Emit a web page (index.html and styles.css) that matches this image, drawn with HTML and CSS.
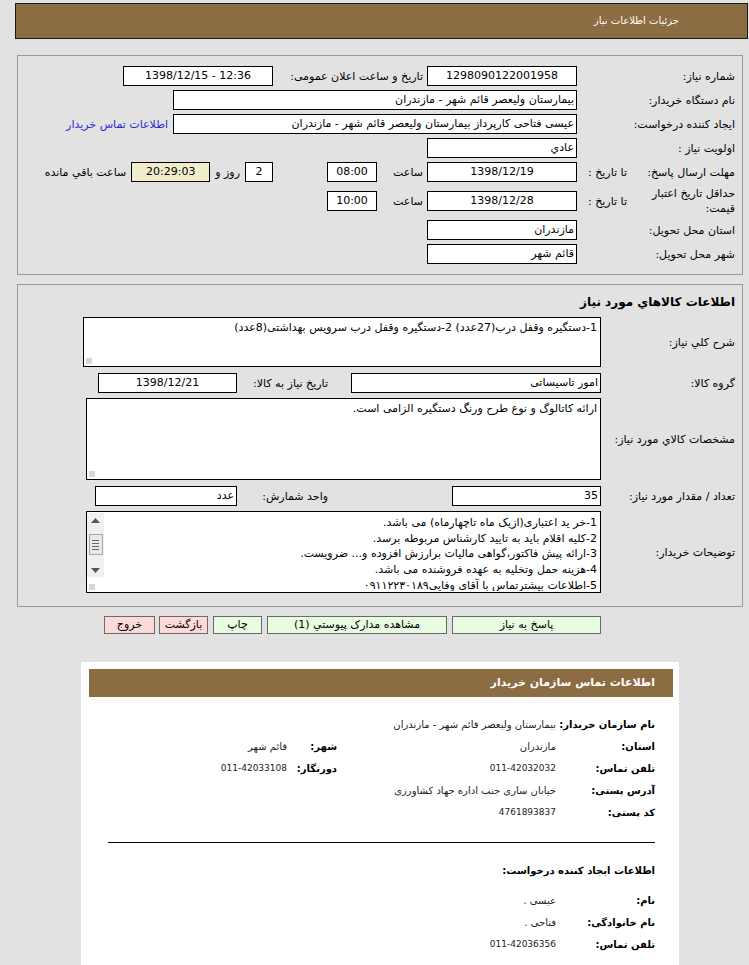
FILE: index.html
```html
<!DOCTYPE html>
<html dir="rtl" lang="fa">
<head>
<meta charset="utf-8">
<link rel="stylesheet" href="styles.css">
</head>
<body>
<div class="hdr">جزئیات اطلاعات نیاز</div>

<div class="panel p1">
  <div class="row">
    <div class="lbl">شماره نیاز:</div>
    <div class="fld w150 c">1298090122001958</div>
    <div class="mid">تاریخ و ساعت اعلان عمومی:</div>
    <div class="fld w150 c" dir="ltr">1398/12/15 - 12:36</div>
  </div>
  <div class="row">
    <div class="lbl">نام دستگاه خریدار:</div>
    <div class="fld w404">بیمارستان ولیعصر قائم شهر - مازندران</div>
  </div>
  <div class="row">
    <div class="lbl">ایجاد کننده درخواست:</div>
    <div class="fld w404">عیسی فتاحی کارپرداز بیمارستان ولیعصر قائم شهر - مازندران</div>
    <a class="lnk" href="#">اطلاعات تماس خریدار</a>
  </div>
  <div class="row">
    <div class="lbl">اولویت نیاز :</div>
    <div class="fld w150">عادي</div>
  </div>
  <div class="row">
    <div class="lbl split"><span>مهلت ارسال پاسخ:</span><span class="sub">تا تاریخ :</span></div>
    <div class="fld w150 c">1398/12/19</div>
    <div class="saat">ساعت</div>
    <div class="fld w50 c">08:00</div>
    <div class="fld w28 c days">2</div>
    <div class="txt">روز و</div>
    <div class="fld w79 c remain">20:29:03</div>
    <div class="txt">ساعت باقي مانده</div>
  </div>
  <div class="row tall">
    <div class="lbl split"><span class="two">حداقل تاریخ اعتبار قیمت:</span><span class="sub">تا تاریخ :</span></div>
    <div class="fld w150 c">1398/12/28</div>
    <div class="saat">ساعت</div>
    <div class="fld w50 c">10:00</div>
  </div>
  <div class="row">
    <div class="lbl">استان محل تحویل:</div>
    <div class="fld w150">مازندران</div>
  </div>
  <div class="row">
    <div class="lbl">شهر محل تحویل:</div>
    <div class="fld w150">قائم شهر</div>
  </div>
</div>

<div class="panel p2">
  <div class="ptitle">اطلاعات کالاهاي مورد نیاز</div>
  <div class="row2 ra">
    <div class="lbl2">شرح کلي نیاز:</div>
    <div class="area a1">1-دستگیره وقفل درب(27عدد) 2-دستگیره وقفل درب سرویس بهداشتی(8عدد)<span class="grip"></span></div>
  </div>
  <div class="row2 rb">
    <div class="lbl2">گروه کالا:</div>
    <div class="fld w250">امور تاسیساتی</div>
    <div class="mid2">تاریخ نیاز به کالا:</div>
    <div class="fld w139 c">1398/12/21</div>
  </div>
  <div class="row2 rc">
    <div class="lbl2">مشخصات کالاي مورد نیاز:</div>
    <div class="area a2">ارائه کاتالوگ و نوع طرح ورنگ دستگیره الزامی است.<span class="grip"></span></div>
  </div>
  <div class="row2 rd">
    <div class="lbl2">تعداد / مقدار مورد نیاز:</div>
    <div class="fld w149">35</div>
    <div class="mid2">واحد شمارش:</div>
    <div class="fld w142">عدد</div>
  </div>
  <div class="row2 re">
    <div class="lbl2">توضیحات خریدار:</div>
    <div class="area a3">
      <div class="lines">
        <div>1-خر ید اعتباری(ازیک ماه تاچهارماه) می باشد.</div>
        <div>2-کلیه اقلام باید به تایید کارشناس مربوطه برسد.</div>
        <div>3-ارائه پیش فاکتور،گواهی مالیات برارزش افزوده و... ضرویست.</div>
        <div>4-هزینه حمل وتخلیه به عهده فروشنده می باشد.</div>
        <div>5-اطلاعات بیشترتماس با آقای وفایی۰۹۱۱۲۲۳۰۱۸۹</div>
      </div>
      <div class="sbar">
        <div class="sb">
          <svg width="9" height="5" viewBox="0 0 9 5"><path d="M4.5 0 L9 5 L0 5 Z" fill="#555"/></svg>
          <div class="thumb"><i></i><i></i><i></i><i></i></div>
          <svg width="9" height="5" viewBox="0 0 9 5"><path d="M0 0 L9 0 L4.5 5 Z" fill="#555"/></svg>
        </div>
        <span class="grip g2"></span>
      </div>
    </div>
  </div>
</div>

<div class="btns">
  <div class="btn green w149b">پاسخ به نیاز</div>
  <div class="btn green w180b">مشاهده مدارک پیوستي (1)</div>
  <div class="btn green w49b">چاپ</div>
  <div class="btn pink w49b">بازگشت</div>
  <div class="btn pink w51b">خروج</div>
</div>

<div class="contact">
  <div class="chdr">اطلاعات تماس سازمان خریدار</div>
  <div class="crow first">
    <div class="cl">نام سازمان خریدار:</div>
    <div class="cv">بیمارستان ولیعصر قائم شهر - مازندران</div>
  </div>
  <div class="crow">
    <div class="cl">استان:</div>
    <div class="cv cvw">مازندران</div>
    <div class="cl2">شهر:</div>
    <div class="cv">قائم شهر</div>
  </div>
  <div class="crow">
    <div class="cl">تلفن تماس:</div>
    <div class="cv cvw num">011-42032032</div>
    <div class="cl2">دورنگار:</div>
    <div class="cv num">011-42033108</div>
  </div>
  <div class="crow">
    <div class="cl">آدرس پستی:</div>
    <div class="cv">خیابان ساری جنب اداره جهاد کشاورزی</div>
  </div>
  <div class="crow">
    <div class="cl">کد پستی:</div>
    <div class="cv num">4761893837</div>
  </div>
  <hr class="sep">
  <div class="csub">اطلاعات ایجاد کننده درخواست:</div>
  <div class="crow first2">
    <div class="cl">نام:</div>
    <div class="cv">عیسی .</div>
  </div>
  <div class="crow">
    <div class="cl">نام خانوادگی:</div>
    <div class="cv">فتاحی .</div>
  </div>
  <div class="crow">
    <div class="cl">تلفن تماس:</div>
    <div class="cv num">011-42036356</div>
  </div>
</div>
</body>
</html>
```
FILE: styles.css
```css
* { box-sizing: border-box; }
html, body { margin: 0; padding: 0; }
body {
  background: #e2e2e2;
  font-family: "DejaVu Sans", sans-serif;
  font-size: 11px;
  color: #000;
  height: 965px;
  overflow: hidden;
}
.hdr {
  margin: 3px 1px 0 15px;
  height: 36px;
  background: #8c6c42;
  border: 1px solid #1a1a1a;
  color: #fff;
  font-size: 10px;
  line-height: 34px;
  padding-right: 68px;
}
.panel {
  margin: 0 6px 0 17px;
  border: 1px solid #9a9a9a;
}
.p1 { margin-top: 16px; padding: 8px 7px 10px 0; height: 220px; }
.row { display: flex; align-items: center; height: 24px; }
.row.tall { height: 34px; }
.lbl { width: 158px; flex: none; }
.lbl.split { display: flex; align-items: center; }
.lbl .sub { margin-right: auto; padding-left: 11px; }
.lbl .two { width: 95px; line-height: 15px; }
.fld {
  height: 20px;
  border: 1px solid #000;
  background: #fff;
  line-height: 18px;
  padding: 0 2px;
  white-space: nowrap;
  overflow: hidden;
  flex: none;
}
.fld.c { text-align: center; }
.w150 { width: 150px; }
.w404 { width: 404px; }
.w50 { width: 50px; }
.w28 { width: 28px; }
.w79 { width: 79px; }
.w250 { width: 250px; }
.w139 { width: 139px; }
.w149 { width: 149px; }
.w142 { width: 142px; }
.mid { width: 154px; padding-right: 4px; flex: none; }
.saat { width: 50px; padding-right: 4px; flex: none; text-align: right; }
.days { margin-right: 54px; }
.txt { padding: 0 5px; flex: none; }
.remain { background: #f1edca; }
.lnk { color: #2b2bd0; text-decoration: none; margin-right: 5px; }

.p2 { margin-top: 9px; padding: 8px 7px 14px 0; height: 323px; }
.ptitle { font-weight: bold; font-size: 12px; height: 18px; line-height: 18px; margin-bottom: 6px; }
.row2 { display: flex; align-items: center; }
.lbl2 { width: 134px; flex: none; }
.area {
  border: 1px solid #000;
  background: #fff;
  position: relative;
  padding: 2px 3px;
  line-height: 16px;
  flex: none;
}
.a1 { width: 518px; height: 50px; }
.a2 { width: 515px; height: 82px; }
.a3 { width: 515px; height: 82px; display: flex; padding: 1px 3px 1px 0; }
.ra { margin-bottom: 6px; }
.rb { height: 20px; margin-bottom: 5px; }
.rc { margin-bottom: 6px; }
.rd { height: 20px; margin-bottom: 5px; }
.mid2 { width: 114px; padding-right: 23px; flex: none; }
.rd .mid2 { width: 215px; padding-right: 124px; }
.lines { flex: 1; padding-top: 2px; line-height: 15.7px; white-space: nowrap; overflow: hidden; }
.sbar { width: 17px; flex: none; display: flex; flex-direction: column; }
.sb {
  height: 64px;
  background: #f0f0f0;
  display: flex;
  flex-direction: column;
  align-items: center;
  justify-content: space-between;
  padding: 5px 0 4px;
}
.thumb {
  width: 14px;
  height: 21px;
  border: 1px solid #a8a8a8;
  background: #e8e8e8;
  margin-top: -2px;
  display: flex;
  flex-direction: column;
  justify-content: center;
  align-items: center;
  gap: 2px;
}
.thumb i { display: block; width: 7px; height: 1px; background: #666; }
.grip {
  position: absolute;
  left: 2px;
  bottom: 2px;
  width: 6px;
  height: 6px;
  background-image: radial-gradient(circle, #aaa 0.6px, transparent 0.8px);
  background-size: 2px 2px;
}
.g2 { left: 2px; }

.btns { display: flex; padding-right: 148px; margin-top: 9px; gap: 5px; }
.btn {
  height: 18px;
  border: 1px solid #6a6a6a;
  text-align: center;
  line-height: 16px;
  font-size: 11px;
  flex: none;
}
.green { background: #e8fce0; }
.pink { background: #fdd9d9; }
.w149b { width: 149px; }
.w180b { width: 180px; }
.w49b { width: 49px; }
.w51b { width: 51px; margin-right: -1px; }

.contact {
  margin: 28px 70px 0 81px;
  background: #fff;
  padding: 7px 6px 40px 8px;
  height: 320px;
}
.chdr {
  height: 28px;
  background: #8c6c42;
  color: #fff;
  font-weight: bold;
  font-size: 11px;
  line-height: 28px;
  padding-right: 18px;
}
.crow { display: flex; align-items: center; height: 22px; padding-right: 18px; }
.crow.first { margin-top: 16px; }
.crow.first2 { margin-top: 8px; }
.cl { width: 99px; font-weight: bold; font-size: 10px; flex: none; }
.cl2 { width: 50px; font-weight: bold; font-size: 10px; flex: none; }
.cv { font-size: 10px; color: #222; flex: none; }
.cv.num { font-size: 9px; }
.cvw { width: 219px; }
.sep { border: 0; border-top: 1px solid #000; margin: 19px 18px 0 19px; }
.csub { font-weight: bold; font-size: 10px; padding-right: 18px; margin-top: 22px; height: 16px; }
```
